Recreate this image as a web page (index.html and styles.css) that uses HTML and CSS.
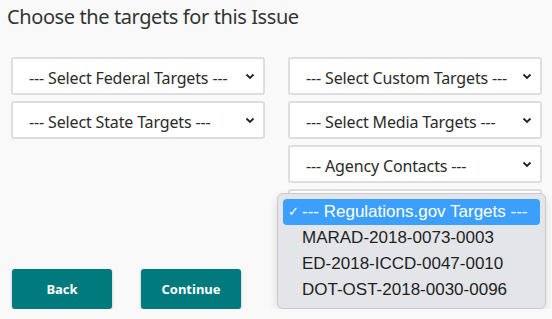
FILE: index.html
```html
<!DOCTYPE html>
<html lang="en">
<head>
  <meta charset="UTF-8" />
  <title>Choose targets</title>
  <link rel="stylesheet" href="styles.css">
</head>
<body>
  <div class="page">
    <h2 class="title">Choose the targets for this Issue</h2>
    <div class="targets">
      <div class="col">
        <div class="pick">
          <select><option>--- Select Federal Targets ---</option></select>
          <svg class="chev" width="10" height="7" viewBox="0 0 10 7"><path d="M1.5 1.5 L5 5 L8.5 1.5" fill="none" stroke="#222" stroke-width="1.8"/></svg>
        </div>
        <div class="pick">
          <select><option>--- Select State Targets ---</option></select>
          <svg class="chev" width="10" height="7" viewBox="0 0 10 7"><path d="M1.5 1.5 L5 5 L8.5 1.5" fill="none" stroke="#222" stroke-width="1.8"/></svg>
        </div>
      </div>
      <div class="col">
        <div class="pick">
          <select><option>--- Select Custom Targets ---</option></select>
          <svg class="chev" width="10" height="7" viewBox="0 0 10 7"><path d="M1.5 1.5 L5 5 L8.5 1.5" fill="none" stroke="#222" stroke-width="1.8"/></svg>
        </div>
        <div class="pick">
          <select><option>--- Select Media Targets ---</option></select>
          <svg class="chev" width="10" height="7" viewBox="0 0 10 7"><path d="M1.5 1.5 L5 5 L8.5 1.5" fill="none" stroke="#222" stroke-width="1.8"/></svg>
        </div>
        <div class="pick">
          <select><option>--- Agency Contacts ---</option></select>
          <svg class="chev" width="10" height="7" viewBox="0 0 10 7"><path d="M1.5 1.5 L5 5 L8.5 1.5" fill="none" stroke="#222" stroke-width="1.8"/></svg>
        </div>
        <div class="pick open">
          <select><option>--- Regulations.gov Targets ---</option></select>
          <ul class="popup">
            <li class="sel"><span class="tick">✓</span>--- Regulations.gov Targets ---</li>
            <li>MARAD-2018-0073-0003</li>
            <li>ED-2018-ICCD-0047-0010</li>
            <li>DOT-OST-2018-0030-0096</li>
          </ul>
        </div>
      </div>
    </div>
    <div class="actions">
      <button class="btn">Back</button>
      <button class="btn">Continue</button>
    </div>
  </div>
</body>
</html>
```

FILE: styles.css
```css
body { margin: 0; background-color: #f9f9f9; color: #2b2b2b; font-family: "Noto Sans", sans-serif; }
.page { padding: 4px 10px 0 11px; }
.title { margin: 0 0 0 -4px; font-size: 20px; font-weight: normal; line-height: 26px; color: #333; letter-spacing: -0.4px; }
.targets { display: grid; grid-template-columns: 254px 254px; column-gap: 23px; margin-top: 27px; }
.col { display: flex; flex-direction: column; gap: 6px; }
.pick { position: relative; height: 38px; }
.pick select {
  appearance: none; -webkit-appearance: none; width: 100%; height: 38px; margin: 0;
  padding: 3px 0 0 16px; border: 2px solid #dedede; border-radius: 3px; background: #fff;
  font-family: "Noto Sans", sans-serif; font-size: 16px; letter-spacing: -0.15px; color: #2b2b2b;
}
.chev { position: absolute; right: 10px; top: 16px; }
.popup {
  position: absolute; left: -11px; top: 4px; width: 257px; margin: 0; padding: 5px 5px 5px 5px;
  list-style: none; background: #e3e5e8; border: 1px solid #c9cbcd; border-radius: 6px;
  box-shadow: 0 4px 10px rgba(0, 0, 0, 0.12);
  font-family: "Liberation Sans", Arial, sans-serif; font-size: 17px; color: #1f1f1f;
}
.popup li { height: 26px; line-height: 26px; padding-left: 19px; position: relative; }
.popup li.sel { background: #3d9ffc; color: #fff; border-radius: 4px; }
.tick { position: absolute; left: 5px; font-size: 13px; }
.actions { display: flex; gap: 29px; margin-top: 42px; padding-left: 1px; }
.btn {
  width: 100px; height: 40px; border: none; border-radius: 3px; background: #007a7c; color: #fff;
  font-family: "Noto Sans", sans-serif; font-size: 13px; font-weight: bold;
  box-shadow: 0 1px 3px rgba(0, 0, 0, 0.25);
}
```
